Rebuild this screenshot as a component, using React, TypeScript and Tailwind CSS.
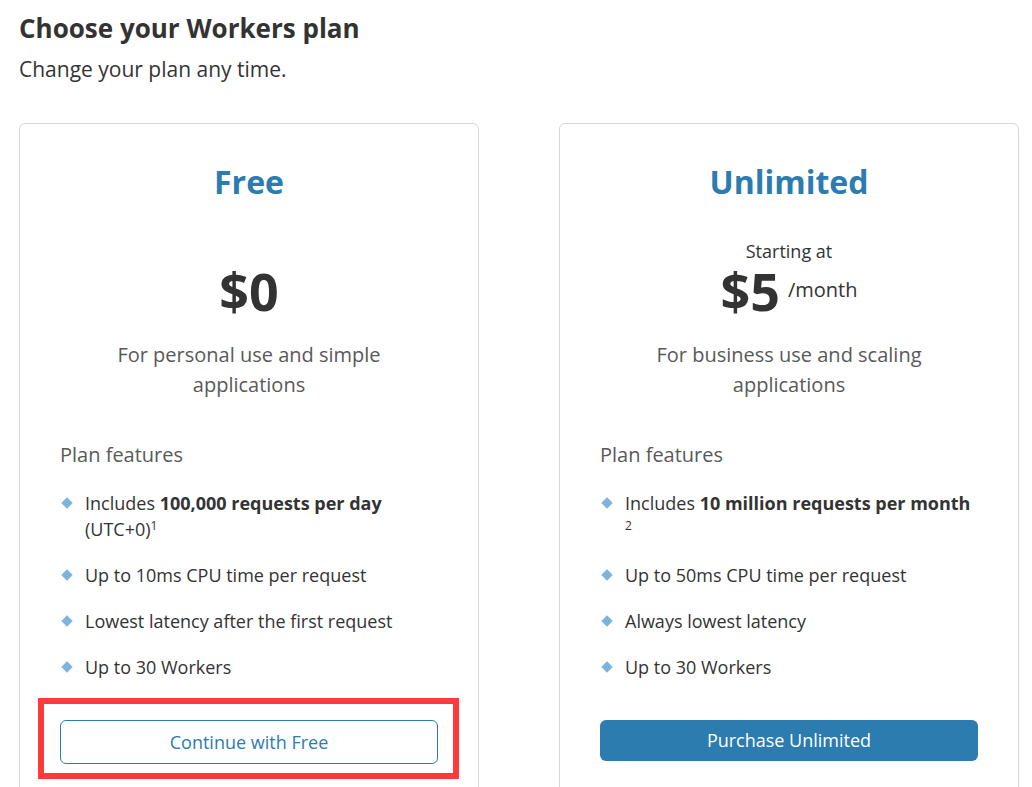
import React from 'react';

interface PlanFeature {
  text: React.ReactNode;
}

interface PlanCardProps {
  title: string;
  price: string;
  startingAt?: boolean;
  perMonth?: boolean;
  description: string[];
  features: PlanFeature[];
  button: React.ReactNode;
}

const FONT = "font-['Open_Sans','Noto_Sans',sans-serif]";

const Bullet: React.FC = () => (
  <span className="w-[25px] shrink-0 flex pt-[9px]">
    <span className="ml-[3px] w-[8px] h-[8px] rotate-45 bg-[#7ab4df]" />
  </span>
);

const PlanCard: React.FC<PlanCardProps> = ({
  title,
  price,
  startingAt,
  perMonth,
  description,
  features,
  button,
}) => {
  return (
    <div className="border border-[#d9d9d9] rounded-[6px] px-10 pt-[38px] pb-10 bg-white">
      <h2 className="text-center text-[32px] leading-[40px] font-bold text-[#2c7cb0]">{title}</h2>

      <div className="mt-[37px] flex flex-col items-center">
        <p className={`text-[18px] leading-[24px] text-[#333] ${startingAt ? '' : 'invisible'}`}>
          Starting at
        </p>
        <div className="h-[56px] flex items-center gap-2">
          <span className="block text-[52px] leading-[56px] font-bold text-[#333]">{price}</span>
          {perMonth && <span className="block text-[20px] leading-[28px] text-[#333] pb-[2px]">/month</span>}
        </div>
      </div>

      <p className="mt-[21px] text-center text-[20px] leading-[30px] text-[#595959]">
        {description[0]}
        <br />
        {description[1]}
      </p>

      <p className="mt-10 text-[20px] leading-[30px] text-[#595959]">Plan features</p>

      <ul className="mt-5 flex flex-col gap-5">
        {features.map((f, i) => (
          <li key={i} className="flex text-[18px] leading-[26px] text-[#333]">
            <Bullet />
            <span>{f.text}</span>
          </li>
        ))}
      </ul>

      <div className="mt-10">{button}</div>
    </div>
  );
};

export default function App() {
  return (
    <div className={`${FONT} bg-white min-h-screen pl-[19px] pt-[10px] text-[#333]`}>
      <h1 className="text-[26px] leading-[36px] font-bold text-[#333]">Choose your Workers plan</h1>
      <p className="mt-2 text-[21px] leading-[30px] text-[#333]">Change your plan any time.</p>

      <div className="mt-[39px] grid grid-cols-2 gap-[80px] w-[1000px]">
        <PlanCard
          title="Free"
          price="$0"
          description={['For personal use and simple', 'applications']}
          features={[
            {
              text: (
                <>
                  Includes <b>100,000 requests per day</b> (UTC+0)
                  <sup className="text-[12px]">1</sup>
                </>
              ),
            },
            { text: 'Up to 10ms CPU time per request' },
            { text: 'Lowest latency after the first request' },
            { text: 'Up to 30 Workers' },
          ]}
          button={
            <div className="relative">
              <button className="w-full h-[44px] rounded-[6px] border border-[#2c7cb0] text-[18px] text-[#2c7cb0] bg-white">
                Continue with Free
              </button>
              {/* annotation box */}
              <div className="absolute -left-[22px] -right-[21px] -top-[22px] -bottom-[15px] border-[6px] border-[#ff3a3a] pointer-events-none" />
            </div>
          }
        />
        <PlanCard
          title="Unlimited"
          price="$5"
          startingAt
          perMonth
          description={['For business use and scaling', 'applications']}
          features={[
            {
              text: (
                <>
                  Includes <b>10 million requests per month</b>
                  <br />
                  <sup className="text-[12px]">2</sup>
                </>
              ),
            },
            { text: 'Up to 50ms CPU time per request' },
            { text: 'Always lowest latency' },
            { text: 'Up to 30 Workers' },
          ]}
          button={
            <button className="w-full h-[41px] rounded-[6px] bg-[#2c7cb0] text-[18px] text-white">
              Purchase Unlimited
            </button>
          }
        />
      </div>
    </div>
  );
}
